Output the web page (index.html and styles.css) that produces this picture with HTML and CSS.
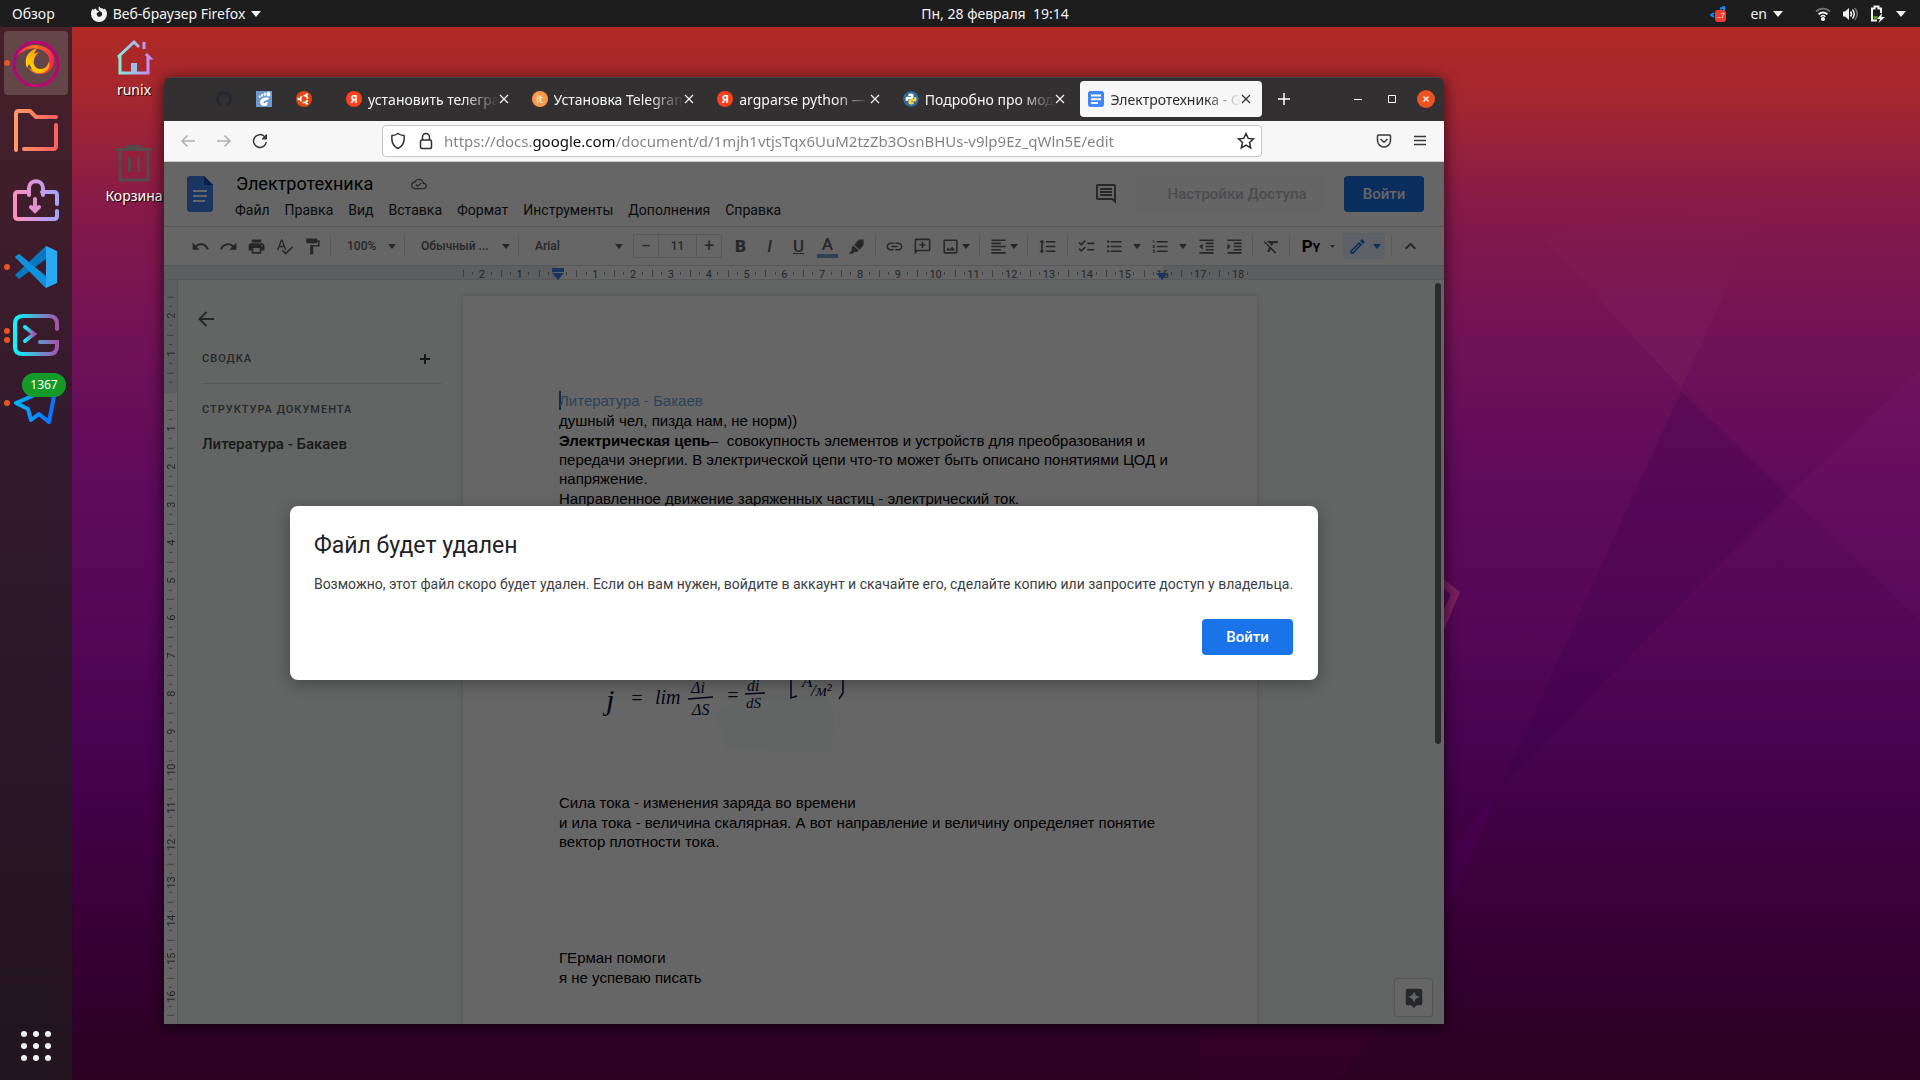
FILE: index.html
```html
<!DOCTYPE html>
<html lang="ru">
<head>
<meta charset="utf-8">
<title>Электротехника</title>
<link rel="stylesheet" href="styles.css">
</head>
<body>
<svg class="defs" aria-hidden="true">
  <defs>
    <linearGradient id="g-fox" x1="0" y1="0" x2="1" y2="1"><stop offset="0" stop-color="#b5007f"/><stop offset="1" stop-color="#c2006e"/></linearGradient>
    <linearGradient id="g-flame" x1="0" y1="0" x2="1" y2="0"><stop offset="0" stop-color="#ff2a4d"/><stop offset=".45" stop-color="#ff7a1a"/><stop offset="1" stop-color="#ff1f4f"/></linearGradient>
    <linearGradient id="g-swirl" x1="0" y1="1" x2="1" y2="0"><stop offset="0" stop-color="#ffe600"/><stop offset="1" stop-color="#ff7a1a"/></linearGradient>
    <linearGradient id="g-folder" x1="0" y1="0" x2="1" y2="0"><stop offset="0" stop-color="#ff9966"/><stop offset="1" stop-color="#ff5e62"/></linearGradient>
    <linearGradient id="g-shop" x1="0" y1="0" x2="1" y2="0"><stop offset="0" stop-color="#ff8fbf"/><stop offset="1" stop-color="#a3a4ff"/></linearGradient>
    <linearGradient id="g-term" x1="0" y1="0" x2="1" y2="0"><stop offset="0" stop-color="#0cf6fb"/><stop offset="1" stop-color="#a354ad"/></linearGradient>
    <linearGradient id="g-tg" x1="0" y1="0" x2="1" y2="0"><stop offset="0" stop-color="#00b2ff"/><stop offset="1" stop-color="#0a6cff"/></linearGradient>
    <linearGradient id="g-home" x1="0" y1="0" x2="1" y2="0"><stop offset="0" stop-color="#7ff0dc"/><stop offset="1" stop-color="#c78af5"/></linearGradient>
    <linearGradient id="g-glow" x1="0" y1="0" x2="0" y2="1"><stop offset="0" stop-color="#8a3068" stop-opacity="0"/><stop offset="1" stop-color="#8a3068" stop-opacity=".22"/></linearGradient>
    <linearGradient id="g-side" x1="0" y1="0" x2="0" y2="1"><stop offset="0" stop-color="#8a2080" stop-opacity=".14"/><stop offset="1" stop-color="#8a2080" stop-opacity=".08"/></linearGradient>
  </defs>
  <symbol id="caret" viewBox="0 0 10 6"><path d="M0 0h10L5 6z"/></symbol>
  <symbol id="cross" viewBox="0 0 10 10"><path d="M1 1l8 8M9 1L1 9" stroke="currentColor" stroke-width="1.2" fill="none"/></symbol>
</svg>

<header class="topbar">
  <div class="topbar-side">
    <button class="top-btn">Обзор</button>
    <button class="top-btn top-app">
      <svg width="16" height="16" viewBox="0 0 16 16" fill="#f2f2f2"><path d="M8 .3l1.600 2c1.500-.300 2.500.200 3.200 1.200l1-.9c1.400 1.500 2.200 3.300 2.200 5.400a8 8 0 0 1-16 0c0-2.300.7-4 1.800-5.300l.6 1.300c.6-.8 1.300-1.300 2.200-1.500L5.800 4.300 8 5.200c-.3 1.100-1.300 1.400-2.300 1.700-.3 2.400.9 3.900 2.700 3.900 1.900 0 2.900-1.500 2.700-3.200-.2-1.300-1-2-2.300-2.400C7.500 4 7.200 2 8 .3z"/></svg>
      Веб-браузер Firefox
      <svg class="caret-top" width="10" height="6"><use href="#caret"/></svg>
    </button>
  </div>
  <button class="top-btn top-clock">Пн, 28 февраля&nbsp; 19:14</button>
  <div class="topbar-side topbar-tray">
    <span class="tray-tg">
      <svg width="16" height="16" viewBox="0 0 16 16" fill="none" stroke="#0a8bff" stroke-width="2"><path d="M10 3l4-2v5M4 7L1 9l3 2"/></svg>
      <span class="tray-count">..7</span>
    </span>
    <button class="top-btn tray-lang">en <svg class="caret-top" width="10" height="6"><use href="#caret"/></svg></button>
    <span class="tray-icons">
      <svg width="16" height="16" viewBox="0 0 16 16" fill="none" stroke="#f2f2f2" stroke-width="1.800"><path d="M1 5.500a10 10 0 0 1 14 0" opacity=".4"/><path d="M3.500 8.300a6.500 6.500 0 0 1 9 0"/><circle cx="8" cy="13" r="1.200" fill="#f2f2f2"/><path d="M5.700 10.700a3.300 3.300 0 0 1 4.600 0" stroke-width="1.400"/></svg>
      <svg width="16" height="16" viewBox="0 0 16 16" fill="none" stroke="#f2f2f2" stroke-width="1.500"><path d="M1 5.500h2L7 2v12l-4-3.500H1z" fill="#f2f2f2" stroke="none"/><path d="M8.500 5.500c1.200 1.500 1.200 3.500 0 5M10.500 3.500c2.200 2.800 2.200 6.200 0 9"/><path d="M12.800 2c3 3.700 3 8.300 0 12" opacity=".4"/></svg>
      <svg width="16" height="18" viewBox="0 0 16 18"><path d="M12 8V3.500H9.500V1.500h-4v2H3v12h5" fill="none" stroke="#f2f2f2" stroke-width="2"/><path d="M4.500 11h4v3h-4z" fill="#4e9a06"/><path d="M13 8l-5 6h3l-1.500 4L16 12h-3.500z" fill="#f2f2f2"/></svg>
      <svg class="caret-top" width="10" height="6"><use href="#caret"/></svg>
    </span>
  </div>
</header>

<main class="desktop">
  <svg class="wallpaper" viewBox="0 27 1920 1053" preserveAspectRatio="none" aria-hidden="true">
    <path d="M1681 391L1788 495 1499 790z" fill="#38004a" opacity=".22"/>
    <path d="M1681 388L1540 235 1768 200z" fill="url(#g-glow)"/>
    <path d="M1788 495L1920 370V620z" fill="url(#g-side)"/>
    <path d="M1499 790l-55 70v60z" fill="#5a0070" opacity=".2"/>
    <path d="M1340 1080l40-50H1200v50z" fill="#4a0030" opacity=".2"/>
    <path d="M1440 576l20 16-16 38-4 8v-20l11-24-11-9z" fill="#7a1f60"/>
  </svg>

  <nav class="dock" aria-label="Приложения">
    <button class="dock-item is-active has-dot" aria-label="Firefox">
      <svg width="48" height="48" viewBox="0 0 48 48" fill="none"><circle cx="24" cy="25" r="22" stroke="url(#g-fox)" stroke-width="3"/><path d="M5 16C10 9 20 4 29 7c9 2 14 9 13 16-1 8-7 12-14 12-6 0-10-3-12-7 6 5 14 4 19 0 3-4 3-9 0-13-4-5-11-7-18-5-4 1-8 4-12 6z" fill="url(#g-flame)"/><path d="M12 7C19 2 29 2 36 7c-8-3-16-3-24 0z" fill="#c2006e"/><path d="M15 29c-3-8-1-16 10-20l-3 6 5-2c-4 4-6 8-5 12 1 4 4 5 7 5 4 0 7-3 8-8 2 6-2 12-9 12-4 0-8-2-9-6l-2-3z" fill="url(#g-swirl)"/></svg>
    </button>
    <button class="dock-item" aria-label="Файлы">
      <svg width="48" height="48" viewBox="0 0 48 48" fill="none" stroke="url(#g-folder)" stroke-width="4" stroke-linecap="round"><path d="M4 43V7q0-3 3-3h11l6 6h20M44 18v21q0 3-3 3H12"/></svg>
    </button>
    <button class="dock-item" aria-label="Магазин приложений">
      <svg width="48" height="48" viewBox="0 0 48 48" fill="none" stroke="url(#g-shop)" stroke-width="4" stroke-linecap="round"><path d="M30 17h12q3 0 3 3v9M45 36v5q0 3-3 3H6q-3 0-3-3V20q0-3 3-3h11M17 20v-7c0-9 14-9 14 0v7"/><path d="M23 24v12M19 32l4 4 4-4" stroke="#e08fd0"/></svg>
    </button>
    <button class="dock-item has-dot" aria-label="Visual Studio Code">
      <svg width="44" height="44" viewBox="0 0 44 44"><path d="M1 12l4-3L32 31V43z" fill="#1a8ad4"/><path d="M1 30l4 4L32 14V1z" fill="#0a78c0"/><path d="M1 12l4-3 27 23v11z" fill="#1191dc"/><path d="M32 1l11 5v32l-11 5z" fill="#2aa8f2"/></svg>
    </button>
    <button class="dock-item has-dot has-two" aria-label="Терминал">
      <svg width="48" height="44" viewBox="0 0 48 44" fill="none" stroke="url(#g-term)" stroke-width="4" stroke-linecap="round"><path d="M45 16v-5q0-8-8-8H11q-8 0-8 8v23q0 7 8 7h26q8 0 8-8v-4H28"/><path d="M13 14l9 7-9 7" /></svg>
    </button>
    <button class="dock-item has-dot" aria-label="Telegram">
      <svg width="44" height="44" viewBox="0 0 44 44" fill="none" stroke="url(#g-tg)" stroke-width="4" stroke-linejoin="round"><path d="M42 5L2 22l12 6 3 11 8-6 10 8z"/></svg>
      <span class="dock-badge">1367</span>
    </button>
    <button class="dock-item dock-apps" aria-label="Показать приложения">
      <svg width="30" height="30" viewBox="0 0 30 30" fill="#f2f2f2"><circle cx="3" cy="3" r="3"/><circle cx="15" cy="3" r="3"/><circle cx="27" cy="3" r="3"/><circle cx="3" cy="15" r="3"/><circle cx="15" cy="15" r="3"/><circle cx="27" cy="15" r="3"/><circle cx="3" cy="27" r="3"/><circle cx="15" cy="27" r="3"/><circle cx="27" cy="27" r="3"/></svg>
    </button>
  </nav>

  <div class="surface">
    <div class="shortcuts">
      <button class="shortcut">
        <svg width="38" height="38" viewBox="0 0 38 38"><path d="M3 19L19 4l5 5M3 19h2v16h28V20h2l-4-4M29 4v7" fill="none" stroke="url(#g-home)" stroke-width="3"/><path d="M16 25h6v10h-6z" fill="#9cc0ec"/></svg>
        runix
      </button>
      <button class="shortcut">
        <svg width="38" height="38" viewBox="0 0 38 38" fill="none" stroke="#54494c" stroke-width="3"><path d="M1 5.500h36M13 5V2.500h12V5M5 6v30h28V6M14.500 13v15M23.500 13v15"/></svg>
        Корзина
      </button>
    </div>

    <section class="window" aria-label="Firefox">
      <div class="titlebar">
        <button class="pin" aria-label="GitHub"><svg width="16" height="16" viewBox="0 0 16 16" fill="#24292f"><path d="M8 0C3.580 0 0 3.580 0 8c0 3.540 2.290 6.530 5.470 7.590.4.07.55-.17.55-.38 0-.19-.01-.82-.01-1.490-2.010.37-2.530-.49-2.690-.94-.09-.23-.48-.94-.82-1.130-.28-.15-.68-.52-.01-.53.63-.01 1.080.58 1.230.82.72 1.210 1.870.87 2.330.66.07-.52.28-.87.51-1.070-1.780-.2-3.640-.89-3.640-3.950 0-.87.31-1.590.82-2.150-.08-.2-.36-1.020.08-2.120 0 0 .67-.21 2.200.82.64-.18 1.320-.27 2-.27s1.360.09 2 .27c1.530-1.040 2.200-.82 2.200-.82.44 1.100.16 1.920.08 2.120.51.56.82 1.270.82 2.150 0 3.070-1.870 3.750-3.650 3.950.29.25.54.73.54 1.480 0 1.070-.01 1.930-.01 2.200 0 .21.15.46.55.38A8.010 8.010 0 0 0 16 8c0-4.420-3.580-8-8-8z"/></svg></button>
        <button class="pin" aria-label="GNOME"><svg width="16" height="16" viewBox="0 0 16 16"><path fill="#6d9bd1" d="M0 0h16v16H0z"/><g fill="#fff"><ellipse cx="12.500" cy="3" rx="2" ry="2.500"/><ellipse cx="8.800" cy="3.200" rx="1.200" ry="1.700"/><ellipse cx="6" cy="4.200" rx="1" ry="1.500"/><ellipse cx="3.700" cy="5.700" rx=".9" ry="1.300"/><path d="M13 7C9 5.500 4 7.500 4 11c0 2.500 2 4 4.500 4s3.500-2 3-4l-2 .2c0 1.500-2 1.200-2-.2 0-2 5-1 5.500-4z"/></g></svg></button>
        <button class="pin" aria-label="Ubuntu"><svg width="16" height="16" viewBox="0 0 16 16"><circle cx="8" cy="8" r="8" fill="#dd4814"/><circle cx="8" cy="8" r="3.500" fill="none" stroke="#fff" stroke-width="1.700" stroke-dasharray="5.700 1.600" stroke-dashoffset="-1"/><g fill="#fff"><circle cx="2.700" cy="8" r="1.200"/><circle cx="10.700" cy="3.400" r="1.200"/><circle cx="10.700" cy="12.600" r="1.200"/></g></svg></button>
        <div class="tabs" role="tablist">
          <div class="tab" role="tab"><span class="fav fav-ya">Я</span><span class="tab-label">установить телеграм</span><button class="tab-close" aria-label="Закрыть"><svg width="10" height="10"><use href="#cross"/></svg></button></div>
          <div class="tab" role="tab"><span class="fav fav-lt">lt</span><span class="tab-label">Установка Telegram</span><button class="tab-close" aria-label="Закрыть"><svg width="10" height="10"><use href="#cross"/></svg></button></div>
          <div class="tab" role="tab"><span class="fav fav-ya">Я</span><span class="tab-label">argparse python — Яндекс</span><button class="tab-close" aria-label="Закрыть"><svg width="10" height="10"><use href="#cross"/></svg></button></div>
          <div class="tab" role="tab"><svg class="fav" viewBox="0 0 16 16"><circle cx="8" cy="8" r="8" fill="#2f6a9c"/><path d="M7.500 2.500c2.500 0 3 .8 3 1.800v2.200c0 1-.8 1.500-1.800 1.500H6.500C5.300 8 4.700 9 4.700 10H3.500C2.300 9.500 2.300 6 3.700 5.700H8V5H5.300c0-1.500-.2-2.500 2.200-2.500z" fill="#fff"/><path d="M8.500 13.500c-2.500 0-3-.8-3-1.800V9.800c0-1 .8-1.500 1.800-1.500h2.200c1.200 0 2-.8 2-2.300h1.200c1.200.5 1.200 4 0 4.600H8.300v.7h2.600c0 1.500 0 2.200-2.400 2.200z" fill="#ffd43b"/></svg><span class="tab-label">Подробно про модуль</span><button class="tab-close" aria-label="Закрыть"><svg width="10" height="10"><use href="#cross"/></svg></button></div>
          <div class="tab is-current" role="tab" aria-selected="true"><svg class="fav fav-doc" viewBox="0 0 16 16"><rect width="16" height="16" rx="2" fill="#4285f4"/><path d="M3 3.500h10v2H3zm0 3.700h10v2H3zm0 3.700h7v2H3z" fill="#fff"/></svg><span class="tab-label">Электротехника - Google</span><button class="tab-close" aria-label="Закрыть"><svg width="10" height="10"><use href="#cross"/></svg></button></div>
        </div>
        <button class="new-tab" aria-label="Новая вкладка"><svg width="12" height="12" viewBox="0 0 12 12" stroke="#fff" stroke-width="1.500"><path d="M6 0v12M0 6h12"/></svg></button>
        <div class="win-controls">
          <button class="win-btn" aria-label="Свернуть"><svg width="8" height="8" viewBox="0 0 8 8"><path d="M0 4h8v1H0z" fill="#fff"/></svg></button>
          <button class="win-btn" aria-label="Развернуть"><svg width="8" height="8" viewBox="0 0 8 8"><path d="M.5.5h7v7h-7z" fill="none" stroke="#fff"/></svg></button>
          <button class="win-btn win-close" aria-label="Закрыть окно"><svg width="8" height="8" viewBox="0 0 8 8"><path d="M1.500 1.500l5 5M6.500 1.500l-5 5" stroke="#fff" stroke-width="1.300"/></svg></button>
        </div>
      </div>

      <div class="navbar">
        <button class="nav-btn is-off" aria-label="Назад"><svg width="16" height="16" viewBox="0 0 16 16"><path d="M15 8H2M7.500 2.500L2 8l5.500 5.500"/></svg></button>
        <button class="nav-btn is-off" aria-label="Вперёд"><svg width="16" height="16" viewBox="0 0 16 16"><path d="M1 8h13M8.500 2.500L14 8l-5.500 5.500"/></svg></button>
        <button class="nav-btn" aria-label="Обновить"><svg width="16" height="16" viewBox="0 0 16 16"><path d="M14.300 9A6.400 6.400 0 1 1 12.500 3.500l1.500 1.500"/><path d="M14.500 1.500V6H10z" fill="currentColor" stroke-width="1"/></svg></button>
        <div class="urlbar">
          <svg width="16" height="18" viewBox="0 0 16 18"><path d="M8 1.500c2 1.500 4 2 6 2 .8 6-1.500 11-6 13-4.500-2-6.800-7-6-13 2 0 4-.5 6-2z"/></svg>
          <svg width="14" height="18" viewBox="0 0 14 18"><rect x="1.500" y="8" width="11" height="8.500" rx="1.500"/><path d="M3.500 8V5a3.500 3.500 0 0 1 7 0v3"/></svg>
          <input class="url" aria-label="Адрес" value="https://docs.google.com/document/d/1mjh1vtjsTqx6UuM2tzZb3OsnBHUs-v9lp9Ez_qWln5E/edit">
          <svg width="18" height="18" viewBox="0 0 18 18"><path d="M9 1.500l2.200 4.900 5.300.5-4 3.600 1.200 5.500L9 13.200 4.300 16l1.200-5.500-4-3.600 5.300-.5z"/></svg>
        </div>
        <div class="nav-right">
          <button class="nav-btn" aria-label="Pocket"><svg width="16" height="16" viewBox="0 0 16 16"><path d="M1.500 3q0-1 1-1h11q1 0 1 1v4.500a6.500 6.500 0 0 1-13 0zM4.500 6L8 9.300 11.500 6"/></svg></button>
          <button class="nav-btn" aria-label="Меню"><svg width="16" height="16" viewBox="0 0 16 16"><path d="M2 3.500h12M2 7.500h12M2 11.500h12"/></svg></button>
        </div>
      </div>

      <div class="page">
        <div class="doc-head">
          <svg class="doc-logo" width="26" height="36" viewBox="0 0 26 36"><path d="M3 0h14l9 9v24q0 3-3 3H3q-3 0-3-3V3q0-3 3-3z" fill="#4285f4"/><path d="M17 0l9 9h-9z" fill="#1a4fb0"/><path d="M6 14h14v2H6zm0 5h14v2H6zm0 5h12v2H6z" fill="#fff"/></svg>
          <div class="doc-info">
            <div class="doc-title-row">
              <input class="doc-title" aria-label="Название" value="Электротехника">
              <svg width="16" height="16" viewBox="0 0 24 24" fill="#5f6368"><path d="M19.350 10.040C18.670 6.590 15.640 4 12 4 9.110 4 6.610 5.640 5.360 8.040 2.350 8.360 0 10.900 0 14c0 3.310 2.690 6 6 6h13c2.760 0 5-2.240 5-5 0-2.640-2.050-4.780-4.650-4.960zM19 18H6c-2.210 0-4-1.790-4-4 0-2.050 1.530-3.760 3.560-3.970l1.070-.11.5-.95C8.080 7.140 9.940 6 12 6c2.620 0 4.880 1.860 5.390 4.430l.3 1.500 1.530.11c1.560.1 2.780 1.410 2.780 2.960 0 1.650-1.350 3-3 3zm-9-3.820l-2.090-2.090L6.500 13.500 10 17l6.010-6.010-1.410-1.410z"/></svg>
            </div>
            <nav class="menu">
              <button>Файл</button><button>Правка</button><button>Вид</button><button>Вставка</button><button>Формат</button><button>Инструменты</button><button>Дополнения</button><button>Справка</button>
            </nav>
          </div>
          <button class="head-comment" aria-label="Комментарии"><svg width="24" height="24" viewBox="0 0 24 24" fill="#5f6368"><path d="M21.990 4c0-1.100-.89-2-1.990-2H4c-1.100 0-2 .9-2 2v12c0 1.100.9 2 2 2h14l4 4-.01-18zM20 4v13.170L18.830 16H4V4h16zM6 12h12v2H6zm0-3h12v2H6zm0-3h12v2H6z"/></svg></button>
          <button class="share" disabled>Настройки Доступа</button>
          <button class="signin">Войти</button>
        </div>

        <div class="toolbar">
          <button class="tb" aria-label="Отменить"><svg viewBox="0 0 24 24"><path d="M12.500 8c-2.650 0-5.050.99-6.900 2.600L2 7v9h9l-3.620-3.620c1.390-1.160 3.160-1.880 5.120-1.880 3.540 0 6.550 2.310 7.600 5.500l2.370-.78C21.080 11.030 17.150 8 12.500 8z"/></svg></button>
          <button class="tb" aria-label="Повторить"><svg viewBox="0 0 24 24"><path d="M18.400 10.600C16.550 8.990 14.150 8 11.500 8c-4.650 0-8.580 3.030-9.960 7.220L3.900 16c1.050-3.190 4.050-5.500 7.600-5.500 1.950 0 3.730.72 5.120 1.880L13 16h9V7l-3.600 3.600z"/></svg></button>
          <button class="tb" aria-label="Печать"><svg viewBox="0 0 24 24"><path d="M19 8H5c-1.660 0-3 1.340-3 3v6h4v4h12v-4h4v-6c0-1.660-1.340-3-3-3zm-3 11H8v-5h8v5zm3-7c-.55 0-1-.45-1-1s.45-1 1-1 1 .45 1 1-.45 1-1 1zm-1-9H6v4h12V3z"/></svg></button>
          <button class="tb" aria-label="Правописание"><svg viewBox="0 0 24 24"><path d="M12.450 16h2.090L9.430 3H7.570L2.460 16h2.090l1.120-3h5.640l1.140 3zm-6.020-5L8.500 5.480 10.570 11H6.430zm15.160.59l-8.090 8.090L9.830 16l-1.410 1.410 5.090 5.090L23 13l-1.410-1.410z"/></svg></button>
          <button class="tb" aria-label="Копировать форматирование"><svg viewBox="0 0 24 24"><path d="M18 4V3c0-.55-.45-1-1-1H5c-.55 0-1 .45-1 1v4c0 .55.45 1 1 1h12c.55 0 1-.45 1-1V6h1v4H9v11c0 .55.45 1 1 1h2c.55 0 1-.45 1-1v-9h8V4h-3z"/></svg></button>
          <i class="sep"></i>
          <span class="pick pick-zoom"><select aria-label="Масштаб"><option>100%</option></select><svg class="car"><use href="#caret"/></svg></span>
          <i class="sep"></i>
          <span class="pick pick-style"><select aria-label="Стиль"><option>Обычный ...</option></select><svg class="car"><use href="#caret"/></svg></span>
          <i class="sep"></i>
          <span class="pick pick-font"><select aria-label="Шрифт"><option>Arial</option></select><svg class="car"><use href="#caret"/></svg></span>
          <span class="size"><button aria-label="Уменьшить">−</button><input aria-label="Размер шрифта" value="11"><button aria-label="Увеличить">+</button></span>
          <button class="tb tb-l"><b>B</b></button>
          <button class="tb tb-l"><em>I</em></button>
          <button class="tb tb-l"><u>U</u></button>
          <button class="tb tb-l"><span class="tcolor">A</span></button>
          <button class="tb tb-l" aria-label="Цвет выделения"><svg viewBox="0 0 24 24"><path d="M15 3h6v7l-5 6-7-6zM8 11l7 6-3 2H9l-2 2H2l4-4v-4z"/></svg></button>
          <i class="sep"></i>
          <button class="tb" aria-label="Ссылка"><svg viewBox="0 0 24 24"><path d="M3.900 12c0-1.710 1.390-3.100 3.100-3.100h4V7H7c-2.760 0-5 2.240-5 5s2.240 5 5 5h4v-1.900H7c-1.710 0-3.100-1.390-3.100-3.100zM8 13h8v-2H8v2zm9-6h-4v1.900h4c1.710 0 3.100 1.390 3.100 3.100s-1.390 3.100-3.100 3.100h-4V17h4c2.760 0 5-2.240 5-5s-2.240-5-5-5z"/></svg></button>
          <button class="tb" aria-label="Добавить комментарий"><svg viewBox="0 0 24 24"><path d="M20 2H4a2 2 0 0 0-2 2v18l4-4h14a2 2 0 0 0 2-2V4a2 2 0 0 0-2-2zm0 14H4V4h16v12zM11 14h2v-3h3V9h-3V6h-2v3H8v2h3z"/></svg></button>
          <button class="tb tb-drop" aria-label="Изображение"><svg viewBox="0 0 24 24"><path d="M19 5v14H5V5h14m0-2H5c-1.100 0-2 .9-2 2v14c0 1.100.9 2 2 2h14c1.100 0 2-.9 2-2V5c0-1.100-.9-2-2-2zm-4.860 8.860l-3 3.870L9 13.140 6 17h12l-3.860-5.140z"/></svg><svg class="car"><use href="#caret"/></svg></button>
          <i class="sep"></i>
          <button class="tb tb-drop" aria-label="Выравнивание"><svg viewBox="0 0 24 24"><path d="M15 15H3v2h12v-2zm0-8H3v2h12V7zM3 13h18v-2H3v2zm0 8h18v-2H3v2zM3 3v2h18V3H3z"/></svg><svg class="car"><use href="#caret"/></svg></button>
          <i class="sep"></i>
          <button class="tb tb-spacing" aria-label="Интервал"><svg viewBox="0 0 24 24"><path d="M6 7h2.500L5 3.500 1.500 7H4v10H1.500L5 20.500 8.500 17H6V7zm4-2v2h12V5H10zm0 14h12v-2H10v2zm0-6h12v-2H10v2z"/></svg></button>
          <i class="sep"></i>
          <button class="tb" aria-label="Контрольный список"><svg viewBox="0 0 24 24"><path d="M22 7h-9v2h9V7zm0 8h-9v2h9v-2zM5.540 11 2 7.460l1.410-1.410 2.120 2.120 4.240-4.240 1.410 1.410L5.540 11zm0 8L2 15.460l1.410-1.410 2.120 2.120 4.240-4.240 1.410 1.410L5.540 19z"/></svg></button>
          <button class="tb tb-wide" aria-label="Маркированный список"><svg viewBox="0 0 24 24"><path d="M4 10.500c-.83 0-1.500.67-1.500 1.500s.67 1.500 1.500 1.500 1.500-.67 1.500-1.500-.67-1.500-1.500-1.500zm0-6c-.83 0-1.500.67-1.500 1.500S3.170 7.500 4 7.500 5.500 6.830 5.500 6 4.830 4.500 4 4.500zm0 12c-.83 0-1.500.68-1.500 1.500s.68 1.500 1.500 1.500 1.500-.68 1.500-1.500-.67-1.500-1.500-1.500zM7 19h14v-2H7v2zm0-6h14v-2H7v2zm0-8v2h14V5H7z"/></svg><svg class="car"><use href="#caret"/></svg></button>
          <button class="tb tb-wide" aria-label="Нумерованный список"><svg viewBox="0 0 24 24"><path d="M2 17h2v.5H3v1h1v.5H2v1h3v-4H2v1zm1-9h1V4H2v1h1v3zm-1 3h1.800L2 13.100v.9h3v-1H3.200L5 10.900V10H2v1zm5-6v2h14V5H7zm0 14h14v-2H7v2zm0-6h14v-2H7v2z"/></svg><svg class="car"><use href="#caret"/></svg></button>
          <button class="tb" aria-label="Уменьшить отступ"><svg viewBox="0 0 24 24"><path d="M11 17h10v-2H11v2zm-8-5l4 4V8l-4 4zm0 9h18v-2H3v2zM3 3v2h18V3H3zm8 6h10V7H11v2zm0 4h10v-2H11v2z"/></svg></button>
          <button class="tb" aria-label="Увеличить отступ"><svg viewBox="0 0 24 24"><path d="M3 21h18v-2H3v2zM3 8v8l4-4-4-4zm8 9h10v-2H11v2zM3 3v2h18V3H3zm8 6h10V7H11v2zm0 4h10v-2H11v2z"/></svg></button>
          <i class="sep"></i>
          <button class="tb" aria-label="Очистить форматирование"><svg viewBox="0 0 24 24"><path d="M3.270 5L2 6.270l6.970 6.970L6.500 19h3l1.570-3.660L16.730 21 18 19.730 3.550 5.270 3.270 5zM6 5v.18L8.820 8h2.400l-.72 1.680 2.100 2.100L14.210 8H20V5H6z"/></svg></button>
          <i class="sep"></i>
          <button class="tb tb-py">P<small>Y</small><svg class="car car-s"><use href="#caret"/></svg></button>
          <button class="tb tb-edit" aria-label="Редактирование"><svg viewBox="0 0 24 24"><path d="M14.060 9.020l.92.92L5.920 19H5v-.92l9.060-9.060M17.660 3c-.25 0-.51.1-.7.29l-1.830 1.830 3.750 3.750 1.830-1.830c.39-.39.39-1.020 0-1.410l-2.340-2.340c-.2-.2-.45-.29-.71-.29zm-3.600 3.190L3 17.250V21h3.750L17.810 9.940l-3.750-3.750z"/></svg><svg class="car"><use href="#caret"/></svg></button>
          <i class="sep"></i>
          <button class="tb" aria-label="Скрыть меню"><svg viewBox="0 0 24 24"><path d="M12 7l-7 7 1.800 1.800L12 10.600l5.200 5.200L19 14z"/></svg></button>
        </div>

        <div class="hruler">
          <div class="hscale">
            <span>2</span><span>1</span><span><svg width="12" height="12" viewBox="0 0 12 12" fill="#4285f4"><path d="M0 0h12v4H0zM0 5h12L6 12z"/></svg></span><span>1</span><span>2</span><span>3</span><span>4</span><span>5</span><span>6</span><span>7</span><span>8</span><span>9</span><span>10</span><span>11</span><span>12</span><span>13</span><span>14</span><span>15</span><span class="has-mark">16<svg class="mark" width="12" height="7" viewBox="0 0 12 7" fill="#4285f4"><path d="M0 0h12L6 7z"/></svg></span><span>17</span><span>18</span>
          </div>
        </div>

        <div class="work">
          <div class="vruler">
            <div class="vscale">
              <span>2</span><span>1</span><span></span><span>1</span><span>2</span><span>3</span><span>4</span><span>5</span><span>6</span><span>7</span><span>8</span><span>9</span><span>10</span><span>11</span><span>12</span><span>13</span><span>14</span><span>15</span><span>16</span><span>17</span><span>18</span>
            </div>
          </div>
          <aside class="outline">
            <button class="outline-back" aria-label="Закрыть структуру"><svg width="16" height="16" viewBox="0 0 16 16" fill="none" stroke="#5f6368" stroke-width="2"><path d="M16 8H1.500M8.500 1L1.500 8l7 7"/></svg></button>
            <div class="outline-sum"><h2>Сводка</h2><button aria-label="Добавить"><svg width="10" height="10" viewBox="0 0 10 10" fill="#3c4043"><path d="M4 0h2v4h4v2H6v4H4V6H0V4h4z"/></svg></button></div>
            <h2>Структура документа</h2>
            <a class="outline-link" href="#top">Литература - Бакаев</a>
          </aside>
          <article class="sheet" id="top">
            <p class="lead">Литература - Бакаев</p>
            <p>душный чел, пизда нам, не норм))</p>
            <p><b>Электрическая цепь</b>–&nbsp; совокупность элементов и устройств для преобразования и передачи энергии. В электрической цепи что-то может быть описано понятиями ЦОД и напряжение.</p>
            <p>Направленное движение заряженных частиц - электрический ток.</p>
            <svg class="formula" width="605" height="283" viewBox="559 508 605 283">
              <path d="M715 710l20-12 40-6 52 4 8 20-4 34-60 0-45-2z" fill="#bff0f0" opacity=".12"/>
              <g fill="#08103a" font-family="'Liberation Serif', serif" font-style="italic">
                <text x="606" y="709" font-size="30">j</text>
                <text x="630" y="704" font-size="20">=</text>
                <text x="655" y="703" font-size="20">lim</text>
                <text x="691" y="692" font-size="16">Δi</text>
                <text x="692" y="714" font-size="16">ΔS</text>
                <text x="726" y="701" font-size="20">=</text>
                <text x="747" y="690" font-size="16">di</text>
                <text x="746" y="707" font-size="15">dS</text>
                <text x="802" y="686" font-size="17">А</text>
                <text x="811" y="695" font-size="17">/м²</text>
              </g>
              <path d="M688 698l25-2M745 693l20-1M791 668v29l6-2M843 668v24l-4 6" fill="none" stroke="#08103a" stroke-width="1.500"/>
            </svg>
            <p>Сила тока - изменения заряда во времени</p>
            <p>и ила тока - величина скалярная. А вот направление и величину определяет понятие вектор плотности тока.</p>
            <p class="late">ГЕрман помоги</p>
            <p>я не успеваю писать</p>
          </article>
          <div class="scroll"></div>
          <button class="explore" aria-label="Анализ данных"><svg width="22" height="22" viewBox="0 0 24 24" fill="#5f6368"><path d="M19 2H5c-1.110 0-2 .9-2 2v14c0 1.100.89 2 2 2h4l3 3 3-3h4c1.100 0 2-.9 2-2V4c0-1.100-.9-2-2-2zm-5.120 10.880L12 17l-1.880-4.120L6 11l4.120-1.880L12 5l1.880 4.120L18 11l-4.120 1.880z"/></svg></button>
        </div>

        <div class="overlay">
          <div class="dialog" role="dialog" aria-labelledby="dlg-title">
            <h1 id="dlg-title">Файл будет удален</h1>
            <p>Возможно, этот файл скоро будет удален. Если он вам нужен, войдите в аккаунт и скачайте его, сделайте копию или запросите доступ у владельца.</p>
            <button class="dialog-btn">Войти</button>
          </div>
        </div>
      </div>
    </section>
  </div>
</main>
</body>
</html>
```
FILE: styles.css
```css
:root {
  --ui: "Noto Sans", sans-serif;
  --docs: Roboto, "Noto Sans", sans-serif;
  --icon: #5f6368;
}
* { box-sizing: border-box; }
body {
  margin: 0;
  height: 100vh;
  display: flex;
  flex-direction: column;
  overflow: hidden;
  font-family: var(--ui);
  font-size: 14px;
  background: #2a0020;
}
button, input, select {
  font: inherit;
  color: inherit;
  border: 0;
  background: none;
  padding: 0;
  margin: 0;
}
svg { flex: none; display: block; }
.defs { position: absolute; width: 0; height: 0; }

/* Top panel */
.topbar {
  flex: none;
  height: 27px;
  display: flex;
  justify-content: space-between;
  align-items: center;
  background: #1d1d1d;
  color: #f2f2f2;
  padding: 0 14px 0 12px;
}
.topbar-side { flex: 1; display: flex; align-items: center; gap: 36px; }
.topbar-tray { justify-content: flex-end; gap: 32px; }
.top-btn { display: flex; align-items: center; gap: 6px; white-space: nowrap; }
.top-clock { margin-left: 72px; }
.caret-top { fill: #f2f2f2; }
.tray-tg { position: relative; width: 16px; height: 16px; margin-right: -8px; }
.tray-count {
  position: absolute;
  right: 0;
  bottom: 0;
  width: 11px;
  height: 12px;
  border-radius: 3px;
  background: #f23c34;
  color: #fff;
  font-size: 7px;
  line-height: 12px;
  text-align: center;
}
.tray-icons { display: flex; align-items: center; gap: 11px; }

/* Desktop */
.desktop {
  flex: 1;
  min-height: 0;
  display: flex;
  position: relative;
  background: linear-gradient(#b02a25 0, #a42730 7%, #861a49 17%, #701257 30%, #5f0b5b 43%, #580858 54%, #470450 68%, #3f0040 78%, #330030 90%, #2a0020 100%);
}
.wallpaper { position: absolute; inset: 0; width: 100%; height: 100%; }
.dock {
  position: relative;
  flex: none;
  width: 72px;
  display: flex;
  flex-direction: column;
  align-items: center;
  gap: 4px;
  padding: 4px 0;
  background: linear-gradient(#46202a 0, #3b1c2a 25%, #331a2e 38%, #2a172a 65%, #23151d 95%);
}
.dock-item {
  position: relative;
  width: 64px;
  height: 64px;
  border-radius: 4px;
  display: flex;
  align-items: center;
  justify-content: center;
}
.dock-item.is-active { background: #654648; }
.dock-item.has-dot::before {
  content: "";
  position: absolute;
  left: 0;
  top: 29px;
  width: 6px;
  height: 6px;
  border-radius: 3px;
  background: #e95420;
}
.dock-item.has-two::before { top: 25px; box-shadow: 0 9px 0 #e95420; }
.dock-apps { margin-top: auto; margin-bottom: -2px; }
.dock-badge {
  position: absolute;
  left: 18px;
  top: 2px;
  width: 44px;
  height: 24px;
  border-radius: 12px;
  background: #149a26;
  color: #fff;
  font-size: 12px;
  line-height: 24px;
  text-align: center;
}
.surface { flex: 1; position: relative; min-width: 0; }
.shortcuts { display: flex; flex-direction: column; gap: 44px; padding: 11px 0 0 2px; width: 122px; }
.shortcut {
  display: flex;
  flex-direction: column;
  align-items: center;
  gap: 4px;
  color: #fff;
  line-height: 20px;
  text-shadow: 1px 1px 1px #000;
}

/* Browser window */
.window {
  position: absolute;
  inset: 50px 476px 56px 92px;
  display: flex;
  flex-direction: column;
  border-radius: 8px 8px 0 0;
  overflow: hidden;
  box-shadow: 0 3px 14px 2px rgba(0, 0, 0, .55);
}
.titlebar {
  flex: none;
  height: 44px;
  display: flex;
  align-items: center;
  padding: 0 9px 1px 40px;
  background: #333031;
  border-top: 1px solid #464344;
  color: #f7f7f7;
}
.pin { width: 40px; height: 36px; display: flex; align-items: center; justify-content: center; }
.tabs { flex: 1; min-width: 0; display: flex; gap: 4px; margin-left: 14px; }
.tab {
  flex: 1;
  min-width: 0;
  height: 36px;
  padding: 0 11px 0 8px;
  border-radius: 4px;
  display: flex;
  align-items: center;
}
.tab.is-current { background: #f7f7f7; color: #2e2e2e; }
.fav { width: 16px; height: 16px; flex: none; border-radius: 8px; color: #fff; font-weight: 700; font-size: 11px; line-height: 16px; text-align: center; }
.fav-doc { border-radius: 2px; }
.fav-ya { background: #fc3f1d; }
.fav-lt { background: #ff9a4d; font-weight: 400; }
.tab-label {
  flex: 1;
  min-width: 0;
  overflow: hidden;
  white-space: nowrap;
  margin-left: 6px;
  -webkit-mask-image: linear-gradient(to left, transparent 0, #000 36px);
  mask-image: linear-gradient(to left, transparent 0, #000 36px);
}
.tab-close { flex: none; }
.new-tab { width: 44px; height: 36px; display: flex; align-items: center; justify-content: center; }
.win-controls { display: flex; align-items: center; gap: 16px; margin-left: 43px; }
.win-btn { width: 18px; height: 18px; border-radius: 9px; display: flex; align-items: center; justify-content: center; }
.win-close { background: #e95420; }

.navbar {
  flex: none;
  height: 41px;
  display: flex;
  align-items: center;
  padding: 0 6px;
  background: #f7f7f7;
  border-bottom: 1px solid #ccc;
}
.nav-btn { width: 36px; height: 32px; display: flex; align-items: center; justify-content: center; color: #3a3a3a; }
.nav-btn svg { fill: none; stroke: currentColor; stroke-width: 1.5; }
.nav-btn.is-off { color: #b0b0b0; }
.urlbar {
  flex: 1;
  height: 32px;
  display: flex;
  align-items: center;
  margin-left: 104px;
  padding: 0 6px 0 7px;
  border: 1px solid #c4c4c4;
  border-radius: 4px;
  background: #fff;
}
.urlbar svg { fill: none; stroke: #2e2e2e; stroke-width: 1.5; }
.urlbar svg + svg { margin-left: 13px; }
.url {
  flex: 1;
  min-width: 0;
  margin-left: 11px;
  font-size: 15px;
  color: transparent;
  background: linear-gradient(to right, #808080 89px, #0c0c0c 89px, #0c0c0c 171px, #808080 171px);
  -webkit-background-clip: text;
  background-clip: text;
}
.nav-right { display: flex; margin-left: 104px; }

/* Document page */
.page {
  position: relative;
  flex: 1;
  min-height: 0;
  display: flex;
  flex-direction: column;
  background: #fff;
  font-family: var(--docs);
}
.doc-head {
  flex: none;
  height: 65px;
  display: flex;
  align-items: center;
  padding: 0 20px 0 23px;
  border-bottom: 1px solid #dadce0;
}
.doc-info { flex: 1; min-width: 0; margin-left: 15px; padding-top: 4px; }
.doc-title-row { display: flex; align-items: center; padding-left: 8px; }
.doc-title { width: 175px; font-size: 18px; line-height: 24px; color: #000; }
.menu { display: flex; margin-top: 4px; }
.menu button { padding: 0 7px; font-size: 14px; line-height: 20px; color: #202124; }
.menu { gap: 1px; }
.head-comment { margin-right: 18px; }
.share {
  width: 188px;
  height: 36px;
  padding-left: 14px;
  border-radius: 4px;
  background: #fcfcfc;
  color: #bdc1c6;
  font-size: 15px;
  font-weight: 500;
}
.signin, .dialog-btn {
  height: 36px;
  border-radius: 4px;
  background: #1a73e8;
  color: #fff;
  font-size: 15px;
  font-weight: 500;
}
.signin { width: 80px; margin-left: 20px; }

.toolbar {
  flex: none;
  height: 39px;
  display: flex;
  align-items: center;
  padding-left: 22px;
  border-bottom: 1px solid #dadce0;
  color: var(--icon);
  fill: var(--icon);
}
.tb {
  flex: none;
  width: 28px;
  height: 26px;
  display: flex;
  align-items: center;
  justify-content: center;
  font-size: 17px;
  font-weight: 500;
}
.tb svg { width: 19px; height: 19px; }
.tb b { font-weight: 900; }
.tb-l { width: 29px; }
.tb-spacing { width: 31px; }
.toolbar svg.car { width: 8px; height: 5px; }
.toolbar svg.car-s { width: 5px; height: 3px; margin-left: 10px; }
.tb-drop { width: 39px; gap: 2px; }
.tb-wide { width: 46px; gap: 9px; }
.tb-py { width: 49px; color: #000; font-weight: 700; }
.tb-py small { font-size: 12px; padding-top: 4px; }
.tb-edit { width: 42px; gap: 6px; margin-right: 2px; border-radius: 4px; background: #e8f0fe; fill: #1a73e8; }
.tcolor { line-height: 20px; border-bottom: 4px solid #6fa8dc; padding: 0 5px; }
.sep { flex: none; width: 1px; height: 20px; margin: 0 4px; background: #dadce0; }
.pick { flex: none; display: grid; align-items: center; font-size: 12px; font-weight: 500; }
.pick > * { grid-area: 1 / 1; }
.pick select { width: 100%; appearance: none; padding-left: 12px; outline: 0; }
.pick .car { justify-self: end; margin-right: 4px; pointer-events: none; }
.pick-zoom { width: 65px; }
.pick-style { width: 105px; }
.pick-font { width: 110px; }
.pick-font .car { margin-right: 10px; }
.size { flex: none; display: flex; height: 24px; margin-right: 4px; border: 1px solid #dadce0; border-radius: 2px; }
.size button { width: 24px; font-size: 18px; line-height: 20px; }
.size input { width: 39px; text-align: center; font-size: 12px; font-weight: 500; border: solid #dadce0; border-width: 0 1px; }

/* Rulers: 21 one-centimetre cells, each running from half to half */
.hruler {
  flex: none;
  height: 14px;
  padding-left: 299px;
  background: #e8eaed;
  border-bottom: 1px solid #dadce0;
  font-size: 11px;
  color: var(--icon);
}
.hscale {
  width: 794px;
  height: 13px;
  display: grid;
  grid-template-columns: repeat(21, 1fr);
  background: linear-gradient(to right, transparent 12%, #fff 12%, #fff 88%, transparent 88%);
}
.hscale span {
  position: relative;
  display: flex;
  align-items: center;
  justify-content: center;
  padding-top: 2px;
  line-height: 11px;
  background:
    linear-gradient(#9aa0a6, #9aa0a6) left center / 1px 7px no-repeat,
    linear-gradient(#9aa0a6, #9aa0a6) 25% center / 1px 3px no-repeat,
    linear-gradient(#9aa0a6, #9aa0a6) 75% center / 1px 3px no-repeat;
}
.mark { position: absolute; bottom: 0; left: 12px; }
.work { position: relative; flex: 1; min-height: 0; display: flex; background: #f6fcf8; overflow: hidden; }
.vruler {
  flex: none;
  width: 14px;
  padding-top: 17px;
  background: linear-gradient(#e8eaed 113px, #fff 113px);
  border-right: 1px solid #dadce0;
  font-size: 11px;
  color: var(--icon);
}
.vscale { height: 794px; display: grid; grid-template-rows: repeat(21, 1fr); }
.vscale span {
  writing-mode: vertical-rl;
  transform: rotate(180deg);
  display: flex;
  align-items: center;
  justify-content: center;
  padding-right: 2px;
  line-height: 11px;
  background:
    linear-gradient(#9aa0a6, #9aa0a6) center bottom / 7px 1px no-repeat,
    linear-gradient(#9aa0a6, #9aa0a6) center 25% / 3px 1px no-repeat,
    linear-gradient(#9aa0a6, #9aa0a6) center 75% / 3px 1px no-repeat;
}
.outline { flex: none; width: 285px; padding: 31px 21px 0 24px; }
.outline-back { display: block; margin-left: -4px; }
.outline h2 {
  margin: 0;
  font-size: 11px;
  line-height: 16px;
  font-weight: 500;
  letter-spacing: 1px;
  text-transform: uppercase;
  color: var(--icon);
}
.outline-sum {
  display: flex;
  align-items: center;
  justify-content: space-between;
  margin: 24px 0 18px;
  padding: 0 12px 16px 0;
  border-bottom: 1px solid #dadce0;
}
.outline-link {
  display: block;
  margin-top: 16px;
  font-size: 15px;
  line-height: 20px;
  font-weight: 500;
  color: #3c4043;
  text-decoration: none;
}
.sheet {
  flex: none;
  width: 794px;
  height: 1123px;
  margin-top: 16px;
  padding: 95px 80px 0 96px;
  display: flex;
  flex-direction: column;
  gap: 1px;
  background: #fff;
  box-shadow: 0 0 4px 1px rgba(60, 64, 67, .15);
  font: 15px/19px "Liberation Sans", Arial, sans-serif;
  color: #000;
}
.sheet p { margin: 0; }
.lead { color: #6fa8dc; box-shadow: inset 2px 0 #2a6fc0; }
.formula { width: 605px; }
.sheet .late { margin-top: 96px; }
.scroll {
  position: absolute;
  right: 3px;
  top: 3px;
  width: 6px;
  height: 62%;
  border-radius: 3px;
  background: #6c6c6c;
}
.explore {
  position: absolute;
  right: 12px;
  bottom: 8px;
  width: 37px;
  height: 37px;
  display: flex;
  align-items: center;
  justify-content: center;
  border-radius: 2px;
  background: #fff;
  box-shadow: 0 0 2px rgba(0, 0, 0, .5);
}

/* Dialog */
.overlay {
  position: absolute;
  inset: 0;
  display: flex;
  align-items: center;
  justify-content: center;
  background: rgba(0, 0, 0, .6);
}
.dialog {
  display: flex;
  flex-direction: column;
  padding: 24px 25px 25px 24px;
  border-radius: 8px;
  background: #fff;
  box-shadow: 0 4px 16px rgba(0, 0, 0, .3);
}
.dialog h1 { margin: 0; font-size: 23px; line-height: 32px; font-weight: 400; color: #202124; }
.dialog p { margin: 12px 0 25px; font-size: 14px; line-height: 20px; color: #3c4043; }
.dialog-btn { width: 91px; align-self: flex-end; }
```
